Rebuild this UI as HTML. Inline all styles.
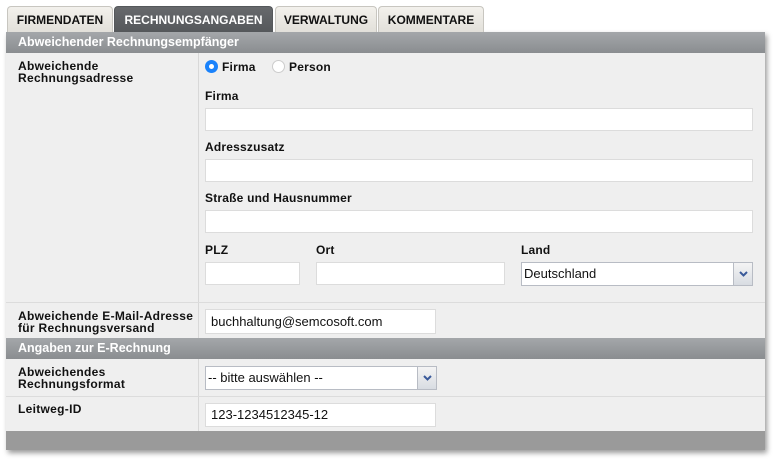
<!DOCTYPE html>
<html><head><meta charset="utf-8"><style>
*{box-sizing:border-box;margin:0;padding:0}
body{width:778px;height:464px;background:#fff;font-family:"Liberation Sans",Arial,sans-serif;position:relative;overflow:hidden}
.a{position:absolute}
.tab{position:absolute;top:6px;height:26px;background:linear-gradient(#f3f1ec,#e2e0da);border:1px solid #c8c6c0;border-bottom:none;border-radius:4px 4px 0 0;font-size:12px;font-weight:bold;color:#111;text-align:center;line-height:27px}
.tab.on{background:linear-gradient(#67696c,#55585b);color:#fff;border-color:#55585b}
.hdr{position:absolute;left:6px;width:759px;height:21px;background:linear-gradient(#a4a7aa,#8a8d90);color:#fff;font-weight:bold;font-size:12.5px;line-height:20px;padding-left:12px}
.row{position:absolute;left:6px;width:759px;background:#efefef;border-top:1px solid #dcdcdc}
.lab{position:absolute;left:12px;font-size:12px;font-weight:bold;color:#111;line-height:12px;letter-spacing:.3px}
.div{position:absolute;left:192px;top:0;bottom:0;border-left:1px solid #d8d8d8}
.fl{position:absolute;font-size:12px;font-weight:bold;color:#111;letter-spacing:.2px}
.in{position:absolute;background:#fff;border:1px solid #dcdcdc;height:23px;font-size:13px;color:#111;line-height:21px;padding-left:5px}
.sel{position:absolute;background:#fff;border:1px solid #b8bcc4;height:24px;font-size:13px;color:#111;line-height:22px;padding-left:2px}
.sel .ar{position:absolute;right:0;top:0;width:19px;height:22px;background:linear-gradient(#f4f4f4,#d8dce2);border-left:1px solid #b8bcc4}
</style></head><body>
<div class="a" style="left:6px;top:32px;width:759px;height:418px;box-shadow:2px 3px 5px rgba(0,0,0,.4)"></div>
<div class="tab" style="left:7px;width:106px">FIRMENDATEN</div>
<div class="tab on" style="left:114px;width:159px">RECHNUNGSANGABEN</div>
<div class="tab" style="left:275px;width:102px">VERWALTUNG</div>
<div class="tab" style="left:378px;width:106px">KOMMENTARE</div>
<div class="hdr" style="top:32px">Abweichender Rechnungsempfänger</div>
<div class="row" style="top:53px;height:249px;border-top:none">
 <div class="div"></div>
 <div class="lab" style="top:7px">Abweichende<br>Rechnungsadresse</div>
 <div class="a" style="left:199px;top:7px;width:13px;height:13px;border-radius:50%;background:#1a82fb"><div class="a" style="left:4px;top:4px;width:5px;height:5px;border-radius:50%;background:#fff"></div></div>
 <div class="fl" style="left:216px;top:7px">Firma</div>
 <div class="a" style="left:266px;top:7px;width:13px;height:13px;border-radius:50%;background:#fff;border:1px solid #ccc"></div>
 <div class="fl" style="left:283px;top:7px">Person</div>
 <div class="fl" style="left:199px;top:36px">Firma</div>
 <div class="in" style="left:199px;top:55px;width:548px"></div>
 <div class="fl" style="left:199px;top:87px">Adresszusatz</div>
 <div class="in" style="left:199px;top:106px;width:548px"></div>
 <div class="fl" style="left:199px;top:138px">Straße und Hausnummer</div>
 <div class="in" style="left:199px;top:157px;width:548px"></div>
 <div class="fl" style="left:199px;top:190px">PLZ</div>
 <div class="fl" style="left:310px;top:190px">Ort</div>
 <div class="fl" style="left:515px;top:190px">Land</div>
 <div class="in" style="left:199px;top:209px;width:95px"></div>
 <div class="in" style="left:310px;top:209px;width:189px"></div>
 <div class="sel" style="left:515px;top:209px;width:232px">Deutschland<div class="ar"><svg width="19" height="22"><path d="M6 9l3.5 3.5L13 9" stroke="#3a5a9a" stroke-width="2" fill="none"/></svg></div></div>
</div>
<div class="row" style="top:302px;height:36px">
 <div class="div"></div>
 <div class="lab" style="top:7px">Abweichende E-Mail-Adresse<br>für Rechnungsversand</div>
 <div class="in" style="left:199px;top:6px;width:231px;height:25px;line-height:23px">buchhaltung@semcosoft.com</div>
</div>
<div class="hdr" style="top:338px">Angaben zur E-Rechnung</div>
<div class="row" style="top:359px;height:37px;border-top:none">
 <div class="div"></div>
 <div class="lab" style="top:7px">Abweichendes<br>Rechnungsformat</div>
 <div class="sel" style="left:199px;top:7px;width:232px">-- bitte auswählen --<div class="ar"><svg width="19" height="22"><path d="M6 9l3.5 3.5L13 9" stroke="#3a5a9a" stroke-width="2" fill="none"/></svg></div></div>
</div>
<div class="row" style="top:396px;height:35px">
 <div class="div"></div>
 <div class="lab" style="top:6px">Leitweg-ID</div>
 <div class="in" style="left:199px;top:6px;width:231px;height:24px">123-1234512345-12</div>
</div>
<div class="a" style="left:6px;top:431px;width:759px;height:19px;background:#9a9a9a"></div>
</body></html>
